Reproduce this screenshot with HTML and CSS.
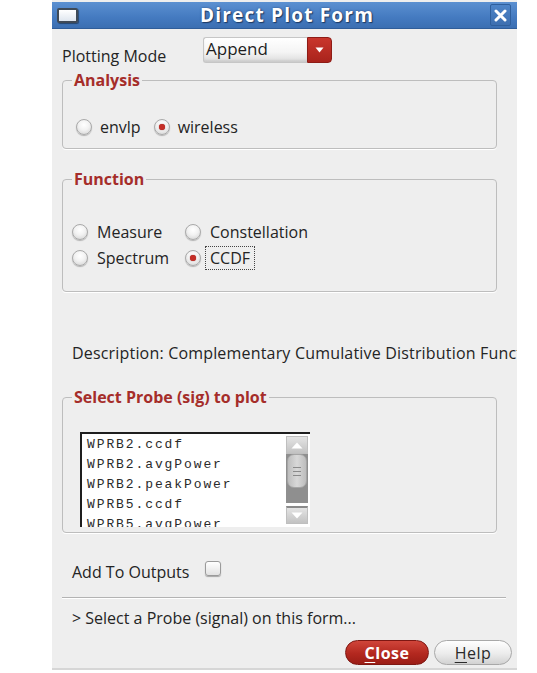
FILE: index.html
```html
<!DOCTYPE html>
<html>
<head>
<meta charset="utf-8">
<link rel="stylesheet" href="styles.css">
</head>
<body>
<div class="window">
  <div class="titlebar">
    <span class="win-icon"></span>
    <span class="title">Direct Plot Form</span>
    <span class="close-x">
      <svg width="13" height="13" viewBox="0 0 13 13"><path d="M2 2 L11 11 M11 2 L2 11" stroke="#fff" stroke-width="3" stroke-linecap="round"/></svg>
    </span>
  </div>
  <div class="main">
    <div class="mode-row">
      <span class="mode-label">Plotting Mode</span>
      <div class="select">
        <span class="select-field">Append</span>
        <span class="select-btn">
          <svg width="9" height="6" viewBox="0 0 9 6"><path d="M0.5 0.5 L8.5 0.5 L4.5 5.5 Z" fill="#fff"/></svg>
        </span>
      </div>
    </div>

    <fieldset class="group analysis">
      <legend>Analysis</legend>
      <div class="group-body">
        <div class="radio-row">
          <span class="radio"></span><span class="rlabel">envlp</span>
          <span class="radio checked gap"></span><span class="rlabel">wireless</span>
        </div>
      </div>
    </fieldset>

    <fieldset class="group function">
      <legend>Function</legend>
      <div class="group-body">
        <div class="radio-grid">
          <div class="opt"><span class="radio"></span><span class="rlabel">Measure</span></div>
          <div class="opt"><span class="radio"></span><span class="rlabel">Constellation</span></div>
          <div class="opt"><span class="radio"></span><span class="rlabel">Spectrum</span></div>
          <div class="opt"><span class="radio checked"></span><span class="rlabel focus">CCDF</span></div>
        </div>
      </div>
    </fieldset>

    <div class="desc">Description: Complementary Cumulative Distribution Function</div>

    <fieldset class="group probe">
      <legend>Select Probe (sig) to plot</legend>
      <div class="group-body">
        <div class="listbox">
          <div class="items">
            <div>WPRB2.ccdf</div>
            <div>WPRB2.avgPower</div>
            <div>WPRB2.peakPower</div>
            <div>WPRB5.ccdf</div>
            <div>WPRB5.avgPower</div>
          </div>
          <div class="scrollbar">
            <div class="sb-up"><svg width="12" height="7" viewBox="0 0 12 7"><path d="M6 0.5 L11.5 6.5 L0.5 6.5 Z" fill="#fff"/></svg></div>
            <div class="sb-trough"><div class="sb-thumb"><span></span><span></span><span></span></div></div>
            <div class="sb-down"><svg width="12" height="7" viewBox="0 0 12 7"><path d="M0.5 0.5 L11.5 0.5 L6 6.5 Z" fill="#fff"/></svg></div>
          </div>
        </div>
      </div>
    </fieldset>

    <div class="outputs-row">
      <span class="outputs-label">Add To Outputs</span>
      <span class="checkbox"></span>
    </div>

    <div class="separator"></div>

    <div class="status">&gt; Select a Probe (signal) on this form...</div>

    <div class="buttons">
      <span class="btn btn-close"><u>C</u>lose</span>
      <span class="btn btn-help"><u>H</u>elp</span>
    </div>
  </div>
</div>
</body>
</html>
```

FILE: styles.css
```css
html, body {
  margin: 0;
  padding: 0;
  background: #ffffff;
}

body {
  font-family: "Open Sans", "DejaVu Sans", sans-serif;
  font-size: 16px;
  color: #242424;
}

.window {
  margin-left: 52px;
  width: 465px;
  height: 668px;
  background: #eeeeee;
  overflow: hidden;
  border-bottom: 2px solid #d6d6d6;
  display: flex;
  flex-direction: column;
}

.titlebar {
  margin-top: 2px;
  height: 27px;
  flex: none;
  display: flex;
  align-items: center;
  background: linear-gradient(#5b90d1, #447ac0 60%, #3b6fb2);
  border-bottom: 1px solid #2f5d99;
  box-sizing: border-box;
}

.win-icon {
  width: 17px;
  height: 11px;
  margin-left: 5px;
  margin-top: 1px;
  background: linear-gradient(#ffffff, #dfe6ef);
  border: 2px solid #3f4a57;
  border-radius: 2px;
  box-shadow: 1px 1px 1px rgba(0,0,0,0.4);
  flex: none;
}

.title {
  flex: 1;
  text-align: center;
  font-family: "Open Sans", "DejaVu Sans", sans-serif;
  font-weight: 700;
  font-size: 19px;
  line-height: 24px;
  color: #ffffff;
  letter-spacing: 1.2px;
  text-shadow: 1px 1px 1px #1d3a63, 0 0 2px #27487a;
  margin-left: 6px;
}

.close-x {
  width: 21px;
  height: 22px;
  margin-right: 6px;
  box-sizing: border-box;
  border: 1px solid #2f5f9c;
  border-radius: 2px;
  background: linear-gradient(#4d84c8, #3d6fb0);
  display: flex;
  align-items: center;
  justify-content: center;
  flex: none;
}

.main {
  padding: 0 5px 0 10px;
  display: flex;
  flex-direction: column;
  align-items: flex-start;
}

.mode-row {
  margin-top: 8px;
  height: 26px;
  display: flex;
  align-items: flex-start;
}

.mode-label {
  width: 141px;
  margin-top: 9px;
  line-height: 20px;
}

.select {
  display: flex;
  width: 129px;
  height: 26px;
  box-sizing: border-box;
}

.select-field {
  flex: 1;
  box-sizing: border-box;
  border: 1px solid #c6c6c6;
  border-right: none;
  border-radius: 3px 0 0 3px;
  background: linear-gradient(#ffffff, #f4f4f4 60%, #dcdcdc);
  padding-left: 2px;
  line-height: 22px;
  font-size: 17px;
  color: #1e1e1e;
  box-shadow: inset 0 -2px 2px rgba(0,0,0,0.08);
}

.select-btn {
  width: 25px;
  border-radius: 0 4px 4px 0;
  background: linear-gradient(#c9362c, #a9231c);
  border: 1px solid #8e1c16;
  box-sizing: border-box;
  display: flex;
  align-items: center;
  justify-content: center;
}

.group {
  margin: 0;
  width: 435px;
  box-sizing: border-box;
  border: 1px solid #bdbdbd;
  border-radius: 4px;
  box-shadow: 0 1px 0 #ffffff;
  padding: 0;
}

.group legend {
  margin-left: 9px;
  padding: 0 2px;
  font-weight: 700;
  font-size: 16px;
  line-height: 20px;
  color: #a52d2a;
}

.analysis {
  margin-top: 7px;
}

.analysis .group-body {
  padding: 28px 0 12px 13px;
}

.radio-row {
  display: flex;
  align-items: center;
  height: 18px;
}

.radio {
  width: 16px;
  height: 16px;
  box-sizing: border-box;
  border-radius: 50%;
  border: 1px solid #a9a9a9;
  background: radial-gradient(circle at 50% 35%, #ffffff 0%, #f2f2f2 45%, #cfcfcf 100%);
  box-shadow: 0 1px 1px rgba(0,0,0,0.25);
  flex: none;
  position: relative;
}

.radio.checked::after {
  content: "";
  position: absolute;
  left: 4px;
  top: 4px;
  width: 6px;
  height: 6px;
  border-radius: 50%;
  background: #c52e27;
  box-shadow: 0 0 1px #7a1a16;
}

.radio.gap {
  margin-left: 13px;
}

.rlabel {
  margin-left: 8px;
  line-height: 18px;
}

.function {
  margin-top: 20px;
}

.function .group-body {
  padding: 34px 0 24px 9px;
}

.radio-grid {
  display: grid;
  grid-template-columns: 113px auto;
  row-gap: 8px;
}

.opt {
  display: flex;
  align-items: center;
  height: 18px;
}

.opt .rlabel {
  margin-left: 9px;
}

.opt .rlabel.focus {
  margin-left: 4px;
  padding: 0 4px;
  border: 1px dotted #444;
  line-height: 22px;
}

.desc {
  margin-top: 50px;
  line-height: 22px;
  white-space: nowrap;
  width: 450px;
  padding-left: 10px;
  letter-spacing: 0.18px;
}

.probe {
  margin-top: 23px;
}

.probe .group-body {
  padding: 25px 0 5px 17px;
}

.listbox {
  width: 230px;
  height: 95px;
  overflow: hidden;
  box-sizing: border-box;
  border-top: 2px solid #1e1e1e;
  border-left: 2px solid #1e1e1e;
  background: #ffffff;
  display: flex;
}

.items {
  flex: 1;
  padding: 1px 0 0 5px;
  font-family: "Liberation Mono", "DejaVu Sans Mono", monospace;
  font-size: 13px;
  letter-spacing: 1.9px;
  line-height: 20px;
  color: #2a2a2a;
}

.scrollbar {
  width: 22px;
  margin-right: 2px;
  padding-top: 2px;
  display: flex;
  flex-direction: column;
  background: #ffffff;
}

.sb-up, .sb-down {
  height: 18px;
  background: linear-gradient(#e4e4e4, #c2c2c2);
  border: 1px solid #bfbfbf;
  box-sizing: border-box;
  display: flex;
  align-items: center;
  justify-content: center;
}

.sb-trough {
  height: 49px;
  background: #8f8f8f;
}

.sb-thumb {
  height: 34px;
  margin: 0 1px;
  border-radius: 7px;
  background: linear-gradient(90deg, #bdbdbd, #d8d8d8 50%, #bdbdbd);
  border: 1px solid #a5a5a5;
  box-sizing: border-box;
  display: flex;
  flex-direction: column;
  align-items: center;
  justify-content: center;
  gap: 3px;
}

.sb-thumb span {
  width: 8px;
  height: 1px;
  background: #8a8a8a;
}

.sb-down {
  margin-top: 3px;
  border-top: 2px solid #8a8a8a;
}

.outputs-row {
  margin-top: 29px;
  display: flex;
  align-items: center;
  height: 20px;
}

.outputs-label {
  width: 133px;
  padding-left: 10px;
  line-height: 20px;
}

.checkbox {
  width: 16px;
  height: 15px;
  margin-top: -7px;
  box-sizing: border-box;
  border: 1px solid #9a9a9a;
  border-radius: 3px;
  background: linear-gradient(#ffffff, #e2e2e2);
  box-shadow: 0 1px 1px rgba(0,0,0,0.3);
}

.separator {
  margin-top: 15px;
  width: 444px;
  height: 1px;
  background: #b3b3b3;
  box-shadow: 0 1px 0 #ffffff;
}

.status {
  margin-top: 10px;
  padding-left: 10px;
  line-height: 20px;
}

.buttons {
  margin-top: 12px;
  align-self: flex-end;
  display: flex;
  gap: 5px;
}

.btn {
  height: 25px;
  box-sizing: border-box;
  border-radius: 13px;
  display: flex;
  align-items: center;
  justify-content: center;
  font-size: 16px;
}

.btn u {
  text-underline-offset: 3px;
}

.btn-close {
  width: 84px;
  background: linear-gradient(#d0453a, #b3281f 55%, #9b1d16);
  border: 1px solid #7e1712;
  color: #ffffff;
  font-weight: 700;
  letter-spacing: 0.5px;
}

.btn-help {
  width: 78px;
  background: linear-gradient(#ffffff, #ececec 55%, #d2d2d2);
  border: 1px solid #a8a8a8;
  color: #2a2a2a;
  letter-spacing: 0.5px;
}
```
